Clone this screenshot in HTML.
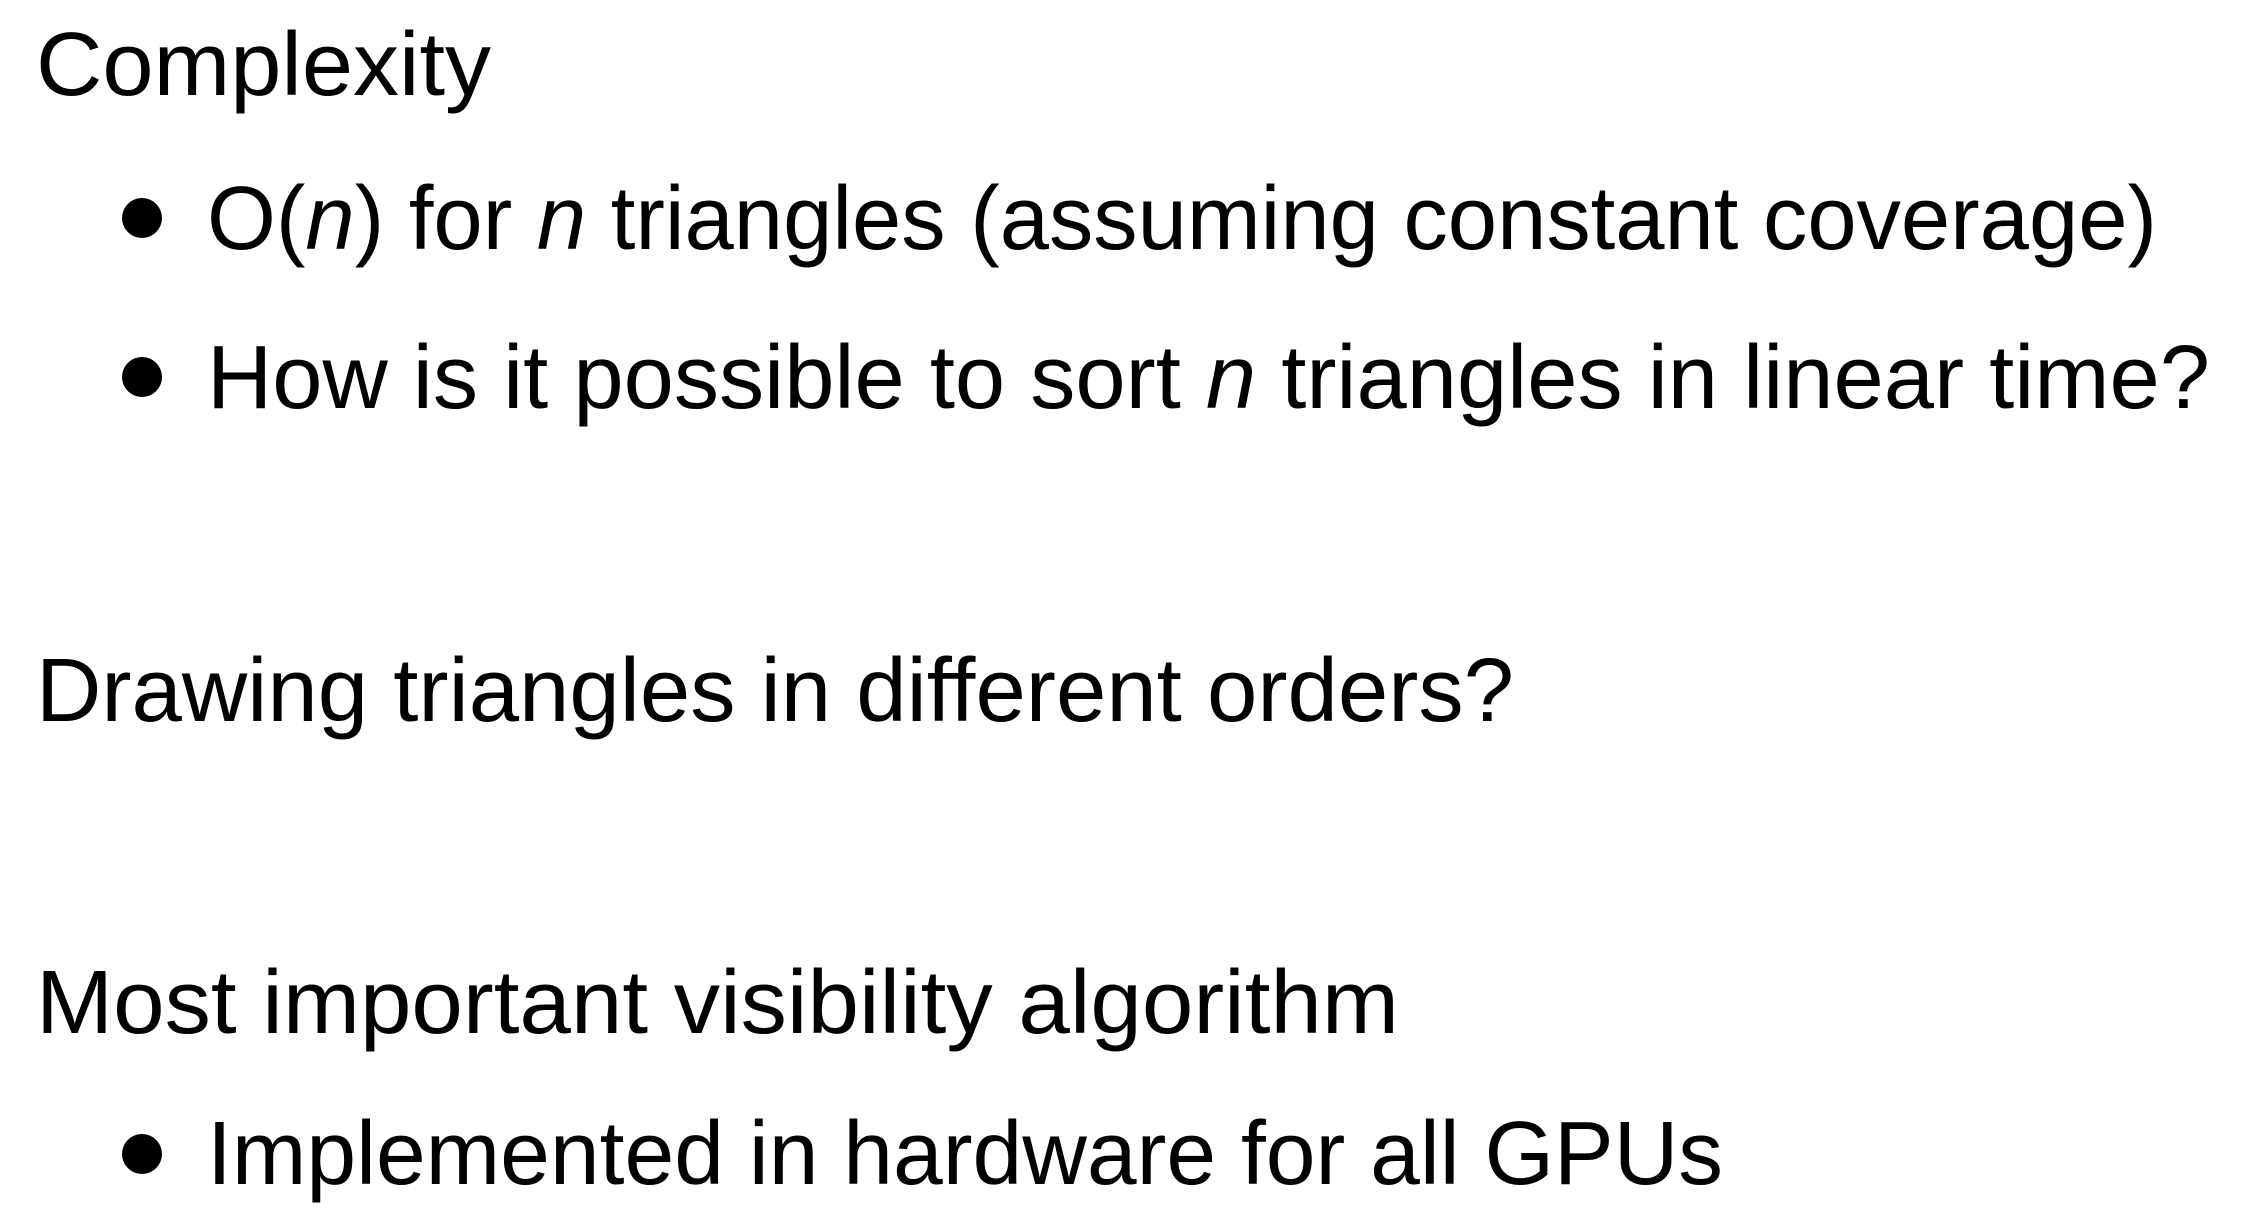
<!DOCTYPE html>
<html><head><meta charset="utf-8"><style>html,body{margin:0;padding:0;background:#fff;width:2252px;height:1230px;overflow:hidden}svg{display:block}text{font-family:"Liberation Sans",sans-serif;font-size:90px;fill:#000}</style></head>
<body>
<svg width="2252" height="1230" viewBox="0 0 2252 1230">
<text x="36" y="95" textLength="455" lengthAdjust="spacingAndGlyphs">Complexity</text>
<circle cx="142" cy="218" r="20"/>
<text x="207" y="249" textLength="1950" lengthAdjust="spacingAndGlyphs">O(<tspan font-style="italic">n</tspan>) for <tspan font-style="italic">n</tspan> triangles (assuming constant coverage)</text>
<circle cx="142" cy="377" r="20"/>
<text x="207" y="408" textLength="2003" lengthAdjust="spacingAndGlyphs">How is it possible to sort <tspan font-style="italic">n</tspan> triangles in linear time?</text>
<text x="36" y="721" textLength="1478" lengthAdjust="spacingAndGlyphs">Drawing triangles in different orders?</text>
<text x="36" y="1033" textLength="1363" lengthAdjust="spacingAndGlyphs">Most important visibility algorithm</text>
<circle cx="142" cy="1154" r="20"/>
<text x="207" y="1184" textLength="1516" lengthAdjust="spacingAndGlyphs">Implemented in hardware for all GPUs</text>
</svg>
</body></html>
